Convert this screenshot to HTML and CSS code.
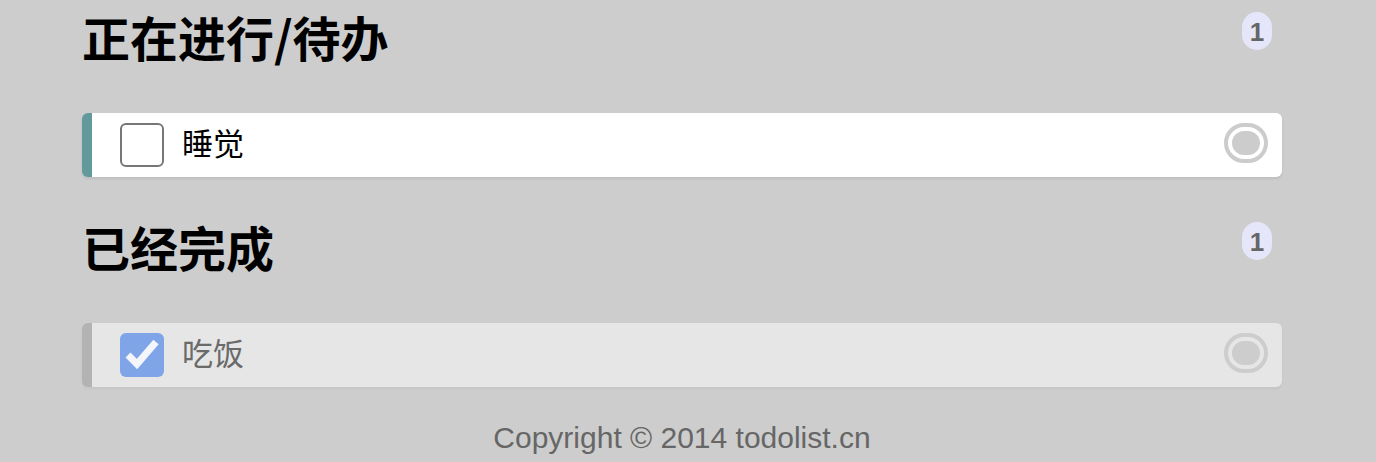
FILE: index.html
```html
<!DOCTYPE html>
<html lang="zh-CN">
<head>
<meta charset="utf-8">
<title>ToDoList</title>
<link rel="stylesheet" href="styles.css">
</head>
<body>
<main class="page">
  <section class="group">
    <h2 class="group-title"><span class="title-text">正在进行/待办</span><span class="count">1</span></h2>
    <ol class="todo-list">
      <li class="todo">
        <span class="check"></span>
        <p class="todo-text">睡觉</p>
        <a class="delete" href="#" aria-label="删除"></a>
      </li>
    </ol>
  </section>
  <section class="group">
    <h2 class="group-title"><span class="title-text">已经完成</span><span class="count">1</span></h2>
    <ol class="todo-list">
      <li class="todo done">
        <span class="check checked"><svg viewBox="0 0 44 44" width="44" height="44"><path d="M8 22 L17 31 L36 9" fill="none" stroke="#f4f6fb" stroke-width="7" stroke-linecap="butt" stroke-linejoin="miter"/></svg></span>
        <p class="todo-text">吃饭</p>
        <a class="delete" href="#" aria-label="删除"></a>
      </li>
    </ol>
  </section>
  <footer class="footer">Copyright © 2014 todolist.cn</footer>
</main>
</body>
</html>
```
FILE: styles.css
```css
html, body {
  margin: 0;
  padding: 0;
  background: #cdcdcd;
}
body {
  font-family: "Noto Sans CJK SC", "Noto Sans", sans-serif;
  color: #000;
  padding-right: 12px;
}
.page {
  width: 1200px;
  margin: 0 auto;
  padding-top: 1px;
}
.group-title {
  display: flex;
  justify-content: space-between;
  align-items: flex-start;
  margin: 0 0 42px;
  height: 70px;
  font-size: 48px;
  line-height: 70px;
  font-weight: 700;
  color: #000;
}
.count {
  margin: 11px 10px 0 0;
  min-width: 30px;
  height: 38px;
  padding: 0;
  border-radius: 16px;
  background: #e6e6fa;
  color: #666;
  font-family: "Liberation Sans", Arial, sans-serif;
  font-size: 26px;
  font-weight: 700;
  line-height: 40px;
  text-align: center;
}
.todo-list {
  list-style: none;
  margin: 0 0 34px;
  padding: 0;
}
.todo {
  display: flex;
  align-items: center;
  height: 64px;
  box-sizing: border-box;
  padding: 0 10px 0 28px;
  background: #fff;
  border-left: 10px solid #629a9c;
  border-radius: 6px;
  box-shadow: 0 2px 3px rgba(0, 0, 0, 0.08);
}
.check {
  width: 44px;
  height: 44px;
  box-sizing: border-box;
  border: 2px solid #777;
  border-radius: 6px;
  background: #fff;
  flex: none;
}
.check.checked {
  border: none;
  background: #7fa4e8;
  display: flex;
}
.todo-text {
  margin: 0 0 0 18px;
  padding-bottom: 6px;
  font-size: 31px;
  line-height: 58px;
  flex: 1;
}
.delete {
  align-self: flex-start;
  margin-top: 6px;
  width: 28px;
  height: 24px;
  border: 12px double #fff;
  border-radius: 28px;
  background: #ccc;
  flex: none;
}
.todo.done {
  background: #e6e6e6;
  border-left-color: #b3b3b3;
  box-shadow: 0 2px 3px rgba(0, 0, 0, 0.04);
}
.todo.done .todo-text {
  color: #6a6a6a;
}
.todo.done .delete {
  border-color: #e6e6e6;
  background: #cdcdcd;
}
.footer {
  margin-top: 0;
  font-family: "Liberation Sans", Arial, sans-serif;
  font-size: 30px;
  line-height: 34px;
  color: #666;
  text-align: center;
}
```
